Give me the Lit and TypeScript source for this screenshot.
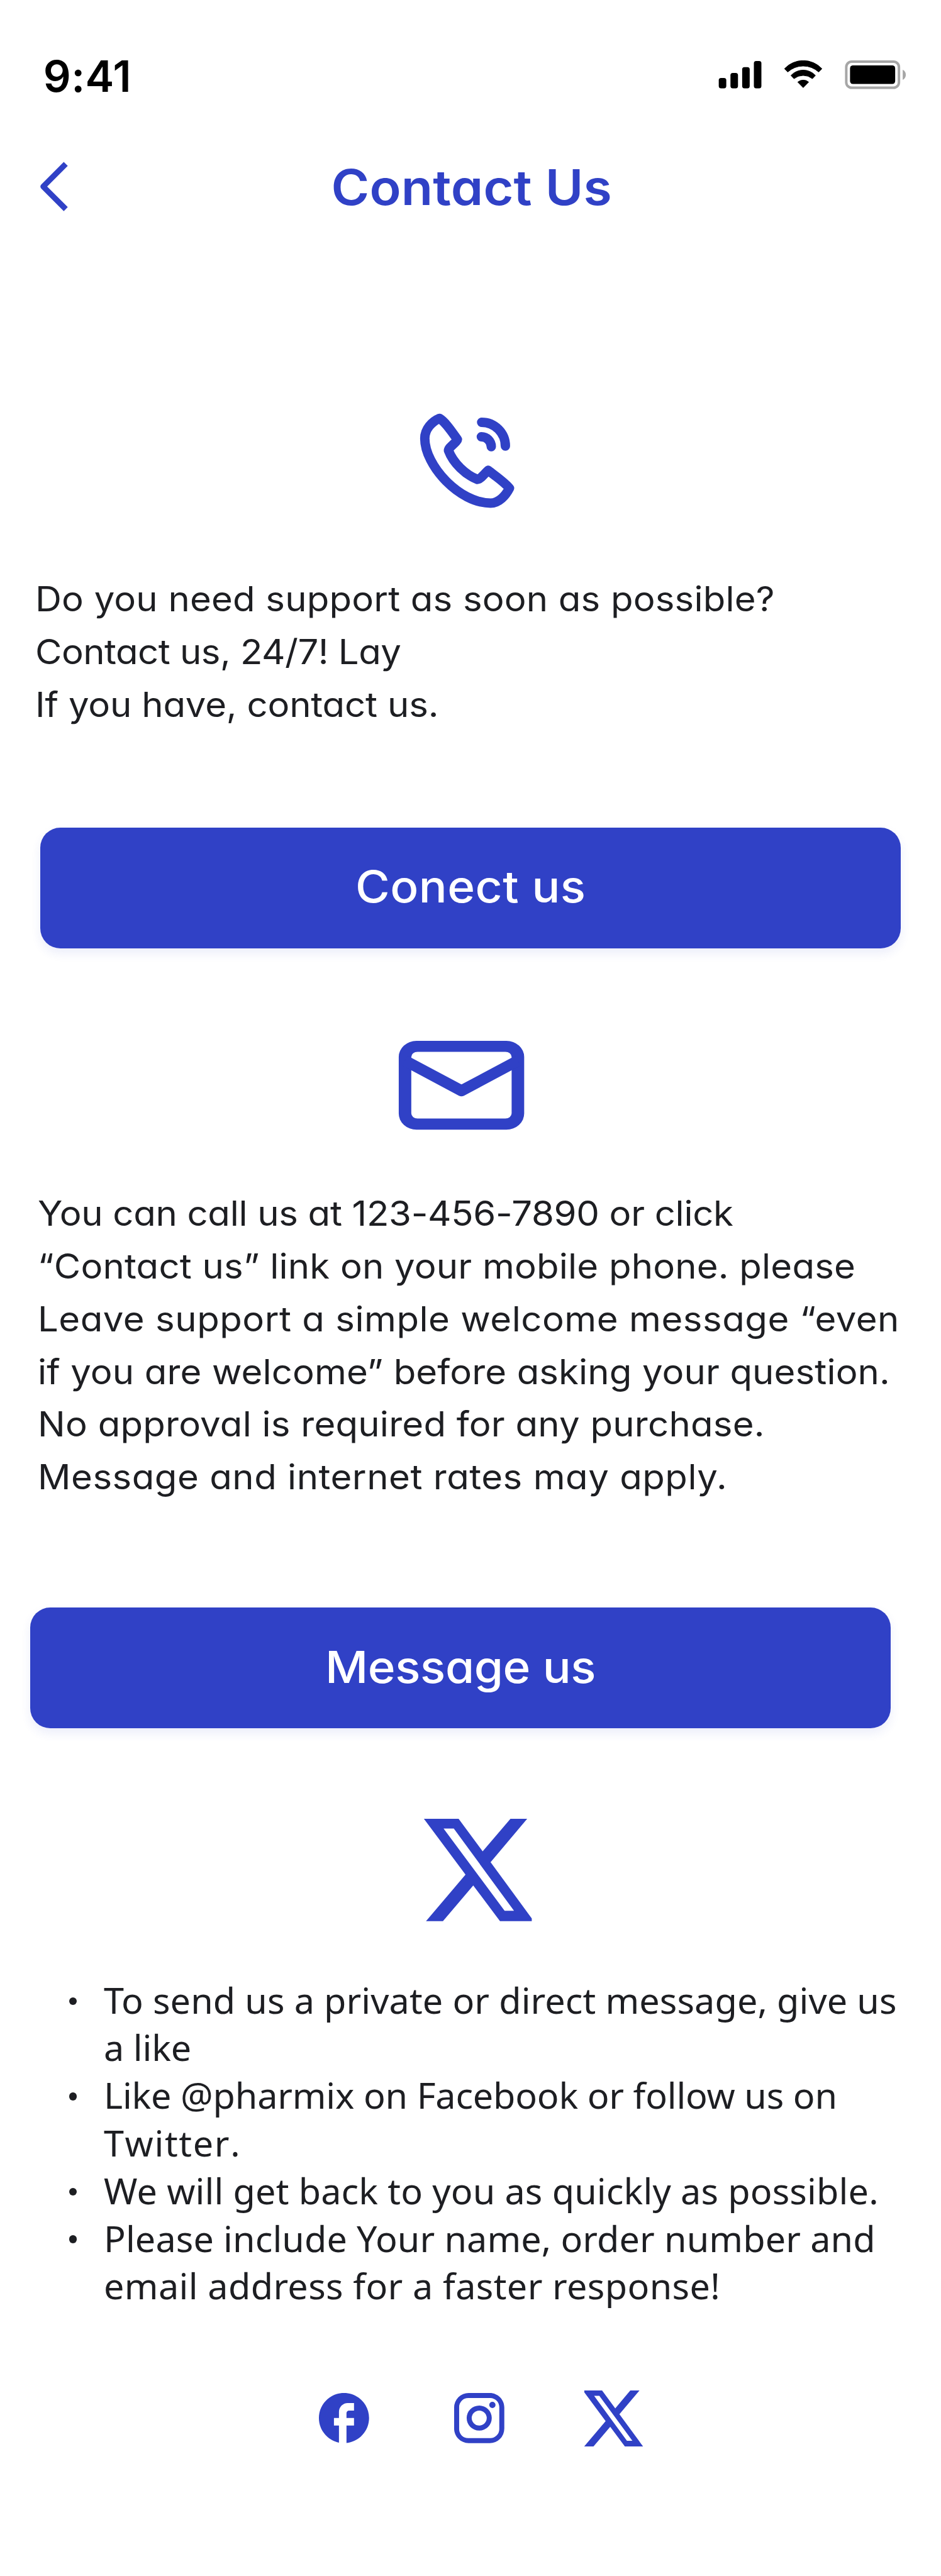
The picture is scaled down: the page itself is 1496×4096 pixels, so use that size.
import { LitElement, html, css, svg } from "lit";
import { customElement, property } from "lit/decorators.js";
import { styleMap } from "lit/directives/style-map.js";

/** A line of copy and the tracking that it is set with, in pixels. */
type Line = [text: string, tracking: number];

const SUPPORT: Line[] = [
  ["Do you need support as soon as possible?", 0.16],
  ["Contact us, 24/7! Lay", -0.5],
  ["If you have, contact us.", -0.18],
];

const CALL: Line[] = [
  ["You can call us at 123-456-7890 or click", -0.3],
  ["“Contact us” link on your mobile phone. please", 0.176],
  ["Leave support a simple welcome message “even", 0.475],
  ["if you are welcome” before asking your question.", 0.098],
  ["No approval is required for any purchase.", 0.205],
  ["Message and internet rates may apply.", 0.478],
];

const NOTES: Line[][] = [
  [["To send us a private or direct message, give us", 0.096], ["a like", -0.18]],
  [["Like @pharmix on Facebook or follow us on", -0.185], ["Twitter.", 1.6]],
  [["We will get back to you as quickly as possible.", 0.146]],
  [["Please include Your name, order number and", 0.115], ["email address for a faster response!", 0.36]],
];

const lines = (rows: Line[]) =>
  rows.map(
    ([text, tracking]) =>
      html`<div class="line" style=${styleMap({ letterSpacing: `${tracking}px`, fontKerning: tracking > 1 ? "none" : "auto" })}>${text}</div>`,
  );

@customElement("status-bar")
class StatusBar extends LitElement {
  static styles = css`
    :host {
      display: flex;
      justify-content: space-between;
      align-items: flex-start;
      height: 52px;
      padding: 96px 54px 0 69px;
      color: #000;
    }
    .time {
      font-size: 69px;
      line-height: 52px;
      font-weight: 600;
      letter-spacing: 0.37px;
    }
    .glyphs {
      display: block;
      width: 301px;
      height: 46px;
    }
  `;
  render() {
    return html`
      <div class="time">9:41</div>
      <svg class="glyphs" viewBox="75 78 903 138">
        <rect x="77" y="162" width="36" height="50" rx="11" />
        <rect x="133" y="138" width="36" height="74" rx="11" />
        <rect x="189" y="110" width="36" height="102" rx="11" />
        <rect x="245" y="81" width="36" height="131" rx="11" />
        <g stroke="#000" stroke-width="3" stroke-linejoin="round">
          <path d="M391.500 118A122 122 0 0 1 570.500 118L555 133.500A110 110 0 0 0 407 133.500Z" />
          <path d="M422.500 150A80 80 0 0 1 539.500 150L525 165.500A70 70 0 0 0 437 165.500Z" />
          <path d="M455 182A40 40 0 0 1 507 182L481 208.500Z" />
        </g>
        <rect x="687" y="84" width="252" height="125" rx="26" fill="none" stroke="#a6a6a6" stroke-width="12" />
        <rect x="705" y="102" width="216" height="89" rx="14" />
        <path d="M957 122.500C966 127 972 136 972 147S966 167 957 171Z" fill="#a6a6a6" />
      </svg>
    `;
  }
}

@customElement("page-header")
class PageHeader extends LitElement {
  static styles = css`
    :host {
      display: grid;
      grid-template-columns: 60px 1fr 60px;
      align-items: center;
      height: 80px;
      padding: 0 60px;
      color: #3041c6;
    }
    .back {
      display: block;
      width: 60px;
      height: 80px;
    }
    .title {
      margin: 0;
      padding: 4px 0 0 3px;
      font-size: 78px;
      line-height: 76px;
      font-weight: 600;
      letter-spacing: 0.13px;
      text-align: center;
      font-feature-settings: "cv11";
      transform: scaleX(1.06);
    }
  `;
  render() {
    return html`
      <svg class="back" viewBox="0 0 60 80" fill="none" stroke="currentColor" stroke-width="9" stroke-linejoin="round">
        <path d="M44.700 3.700L8.700 39.700L44.700 75.700" />
      </svg>
      <h1 class="title">Contact Us</h1>
    `;
  }
}

@customElement("action-button")
class ActionButton extends LitElement {
  @property() label = "";
  @property({ type: Number }) tracking = 0;
  static styles = css`
    :host {
      display: block;
    }
    .button {
      display: flex;
      align-items: center;
      justify-content: center;
      box-sizing: border-box;
      width: 1372px;
      height: 192px;
      padding: 0 0 3px;
      border: 0;
      border-radius: 32px;
      background: #3041c6;
      color: #fff;
      box-shadow: 0 8px 16px rgba(48, 65, 198, 0.09);
      font: 500 70px/84px Inter, "Liberation Sans", sans-serif;
      font-feature-settings: "cv11";
    }
    .label {
      transform: scaleX(1.07);
    }
  `;
  render() {
    return html`<button class="button">
      <span class="label" style=${styleMap({ letterSpacing: `${this.tracking}px` })}>${this.label}</span>
    </button>`;
  }
}

const phoneIcon = svg`
  <g fill="none" stroke="currentColor" stroke-width="45" stroke-linejoin="round" stroke-linecap="round">
    <path d="M243 112C207 127 172.500 163 172.500 208C172.500 338 338 517.500 487 517.500C528 517.500 560 480 577.500 446C552 416 512 389 476 361C466 367 440 404 424 404C368 382 308 326 286 266C284 252 328 224 328.500 213C300 173 270 128 243 112Z" />
    <path d="M444.500 131A113.500 113.500 0 0 1 558 244.500" />
    <path d="M443 200A47.500 47.500 0 0 1 490.500 247.500" />
  </g>`;

const mailIcon = svg`
  <path fill="currentColor" fill-rule="evenodd" d="M163 60H593A85 77 0 0 1 678 137V408A85 77 0 0 1 593 485H163A85 77 0 0 1 78 408V137A85 77 0 0 1 163 60ZM168 112.500A30 25 0 0 0 138 137.500V407A30 25 0 0 0 168 432H588A30 25 0 0 0 618 407V137.500A30 25 0 0 0 588 112.500Z" />
  <path fill="none" stroke="currentColor" stroke-width="53" stroke-linejoin="round" d="M108 155L378 299L648 155" />`;

const xIcon = svg`
  <path fill="currentColor" fill-rule="evenodd" d="M63 63H229L344 219L477 63H557L382 271L579 540V553H427L299 382L154 553H73L262 330ZM157 110L449 503H494L206 110Z" />`;

const smallXIcon = svg`
  <path fill="currentColor" fill-rule="evenodd" d="M66 66H151L214 152L286 66H330L234 180L347 334H260L190 240L110 334H66V333L168 213L66 75ZM113 92L270 307H296L138 92Z" />`;

@customElement("app-root")
class AppRoot extends LitElement {
  static styles = css`
    :host {
      display: block;
      background: #fff;
      font-family: Inter, "Liberation Sans", sans-serif;
      color: #1d1e22;
    }
    .screen {
      display: flex;
      flex-direction: column;
      width: 1500px;
      height: 4108px;
      zoom: 0.99708;
      overflow: hidden;
    }
    .header {
      margin-top: 110px;
    }
    .icon {
      display: block;
      flex: none;
      color: #3041c6;
    }
    .phone {
      width: 250px;
      height: 200px;
      margin: 292px 0 84px 620px;
    }
    .mail {
      width: 250px;
      height: 180px;
      margin: 128px 0 74px 610px;
    }
    .x {
      width: 220px;
      height: 200px;
      margin: 124px 0 72px 655px;
    }
    .line {
      width: max-content;
      transform-origin: left;
    }
    .copy {
      font-size: 55px;
      line-height: 84px;
      white-space: nowrap;
      font-feature-settings: "cv11";
    }
    .copy .line {
      transform: scaleX(1.06);
    }
    .support {
      padding-left: 56px;
    }
    .call {
      padding-left: 60px;
    }
    .connect {
      margin: 154px 0 0 64px;
    }
    .message {
      margin: 166px 0 0 48px;
    }
    .notes {
      margin: 0;
      padding: 0 0 0 110px;
      list-style: none;
      font: 400 56px/76px "Noto Sans", sans-serif;
      white-space: nowrap;
    }
    .notes .line {
      transform: scaleX(1.03);
    }
    .note {
      display: flex;
      gap: 42.500px;
    }
    .dot {
      flex: none;
      width: 12.500px;
      height: 12.500px;
      margin-top: 33px;
      border-radius: 50%;
      background: currentColor;
    }
    .social {
      display: flex;
      align-items: center;
      height: 130px;
      margin-top: 106px;
      padding-left: 500px;
    }
    .round {
      width: 96px;
      height: 96px;
      margin: 2px 120px 0 0;
    }
    .square {
      width: 96px;
      height: 96px;
      margin: 2px 98px 0 0;
    }
    .small-x {
      width: 140px;
      height: 130px;
    }
  `;
  render() {
    return html`
      <main class="screen">
        <status-bar></status-bar>
        <page-header class="header"></page-header>
        <svg class="icon phone" viewBox="0 0 750 600">${phoneIcon}</svg>
        <div class="copy support">${lines(SUPPORT)}</div>
        <action-button class="connect" label="Conect us" tracking="0.45"></action-button>
        <svg class="icon mail" viewBox="0 0 750 540">${mailIcon}</svg>
        <div class="copy call">${lines(CALL)}</div>
        <action-button class="message" label="Message us" tracking="-0.34"></action-button>
        <svg class="icon x" viewBox="0 0 660 600">${xIcon}</svg>
        <ul class="notes">
          ${NOTES.map((note) => html`<li class="note"><span class="dot"></span><div>${lines(note)}</div></li>`)}
        </ul>
        <div class="social">
          <svg class="icon round" viewBox="0 0 24 24" fill="currentColor">
            <path d="M22 12c0-5.520-4.480-10-10-10S2 6.480 2 12c0 4.840 3.440 8.870 8 9.800V15H8v-3h2V9.500C10 7.570 11.570 6 13.500 6H16v3h-2c-.55 0-1 .45-1 1v2h3v3h-3v6.950c5.050-.5 9-4.760 9-9.950z" />
          </svg>
          <svg class="icon square" viewBox="0 0 24 24" fill="currentColor">
            <path d="M7.800 2h8.400C19.400 2 22 4.600 22 7.800v8.400a5.800 5.800 0 0 1-5.800 5.800H7.800C4.600 22 2 19.400 2 16.200V7.800A5.800 5.800 0 0 1 7.800 2m-.2 2A3.600 3.600 0 0 0 4 7.600v8.800C4 18.390 5.610 20 7.600 20h8.800a3.600 3.600 0 0 0 3.600-3.600V7.600C20 5.610 18.390 4 16.400 4H7.600m9.650 1.500a1.250 1.250 0 0 1 0 2.500 1.250 1.250 0 0 1 0-2.500M12 7a5 5 0 0 1 0 10 5 5 0 0 1 0-10m0 2a3 3 0 0 0 0 6 3 3 0 0 0 0-6z" />
          </svg>
          <svg class="icon small-x" viewBox="0 0 420 390">${smallXIcon}</svg>
        </div>
      </main>
    `;
  }
}
